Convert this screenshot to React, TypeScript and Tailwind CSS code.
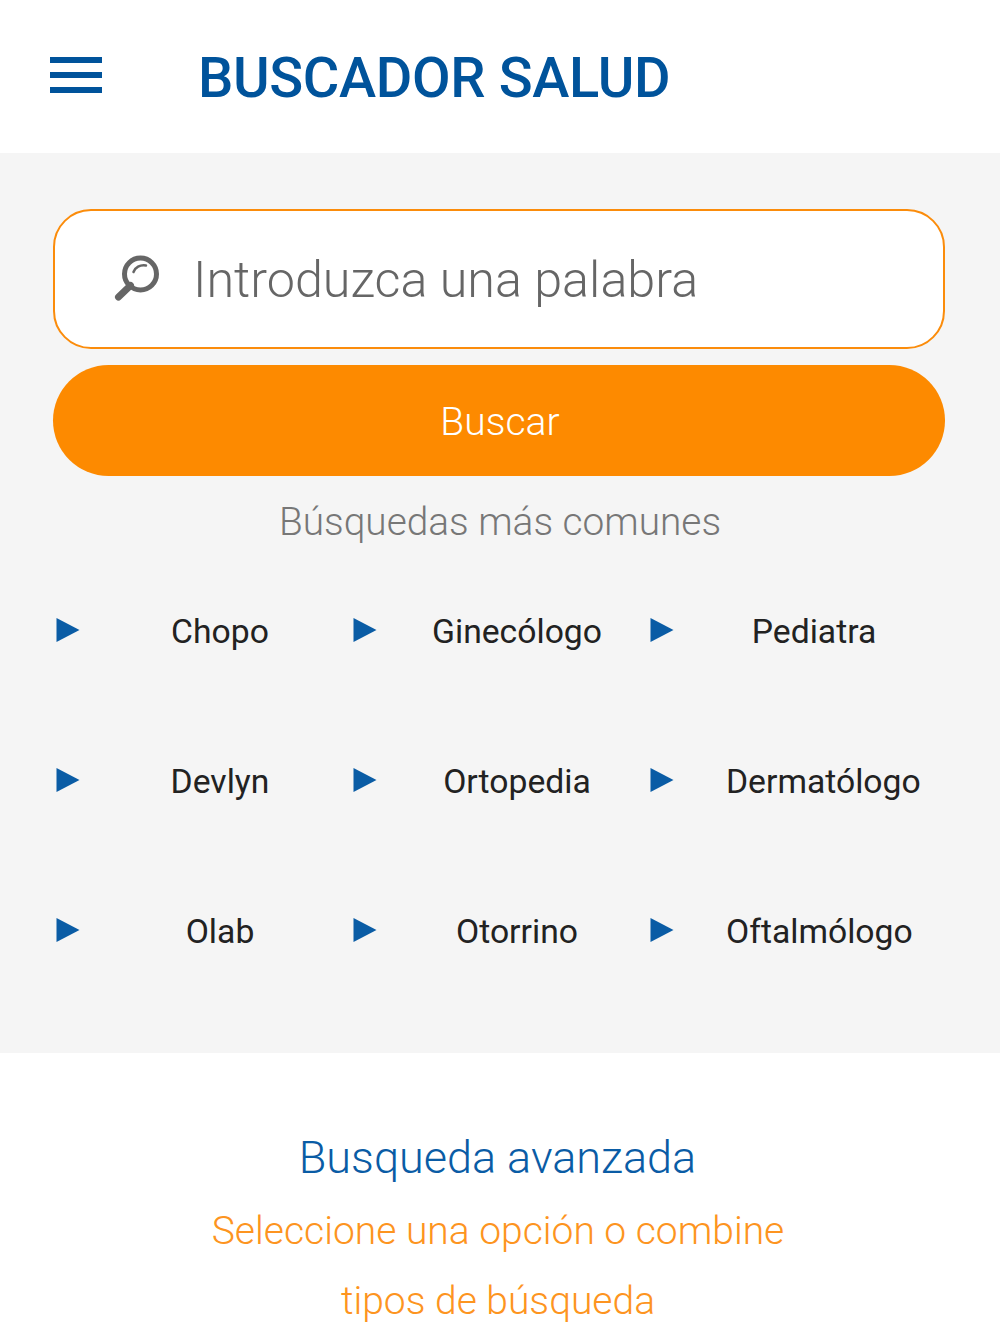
import React from 'react';

const terms = ['Chopo', 'Ginecólogo', 'Pediatra', 'Devlyn', 'Ortopedia', 'Dermatólogo', 'Olab', 'Otorrino', 'Oftalmólogo'];

function Arrow() {
  return (
    <svg width="24" height="26" viewBox="0 0 24 26" className="shrink-0">
      <polygon points="0.5,1 23.5,13 0.5,25" fill="#0a5ca5" />
    </svg>
  );
}

function SearchIcon() {
  return (
    <svg width="48" height="48" viewBox="0 0 48 48" fill="none" className="shrink-0">
      <circle cx="27.5" cy="19" r="16" stroke="#666666" strokeWidth="5" />
      <path d="M17.5 30.5 L5.5 42" stroke="#666666" strokeWidth="7" strokeLinecap="round" />
      <path d="M20.5 17 C22 12.5 27 9.5 33 10.5" stroke="#666666" strokeWidth="2.5" strokeLinecap="round" />
    </svg>
  );
}

export default function App() {
  return (
    <div className="w-[1000px] h-[1334px] overflow-hidden bg-white font-['Roboto',sans-serif]">
      <header className="h-[153px] flex items-start bg-white">
        <div className="ml-[50px] mt-[57px] w-[52px] flex flex-col gap-[9px]">
          <div className="h-[6px] bg-[#00539b]" />
          <div className="h-[6px] bg-[#00539b]" />
          <div className="h-[6px] bg-[#00539b]" />
        </div>
        <h1 className="ml-[96px] mt-[45px] text-[56px] leading-[66px] font-medium text-[#00539b] tracking-[-0.35px] whitespace-nowrap">
          BUSCADOR SALUD
        </h1>
      </header>

      <main className="h-[900px] bg-[#f5f5f5] pt-[56px]">
        <div className="mx-[53px] w-[892px] h-[140px] rounded-[38px] border-2 border-[#fb8c0b] bg-white flex items-center pl-[58px]">
          <SearchIcon />
          <span className="ml-[32px] mt-[2px] text-[50.3px] font-light text-[#666666] whitespace-nowrap">Introduzca una palabra</span>
        </div>
        <button className="block mx-[53px] mt-[16px] pt-[4px] pl-[2px] w-[892px] h-[111px] rounded-[56px] bg-[#fd8a00] text-white text-[39px] font-light">
          Buscar
        </button>
        <p className="mt-[21px] text-center text-[38.8px] leading-[50px] font-light text-[#777777]">Búsquedas más comunes</p>

        <div className="ml-[56px] mt-[70px] grid grid-cols-[297px_297px_297px] auto-rows-[150px]">
          {terms.map((term) => (
            <div key={term} className="flex items-start">
              <Arrow />
              <span className="ml-[52px] mt-[-7px] w-[176px] text-center text-[33.7px] leading-[44px] text-[#222222] whitespace-nowrap">
                {term}
              </span>
            </div>
          ))}
        </div>
      </main>

      <section className="text-center font-light">
        <h2 className="mt-[77px] pr-[5px] text-[45px] leading-[56px] text-[#0a5ca5]">Busqueda avanzada</h2>
        <p className="mt-[10px] pr-[4px] text-[39px] leading-[70px] text-[#fd9420]">
          Seleccione una opción o combine
          <br />
          tipos de búsqueda
        </p>
      </section>
    </div>
  );
}
